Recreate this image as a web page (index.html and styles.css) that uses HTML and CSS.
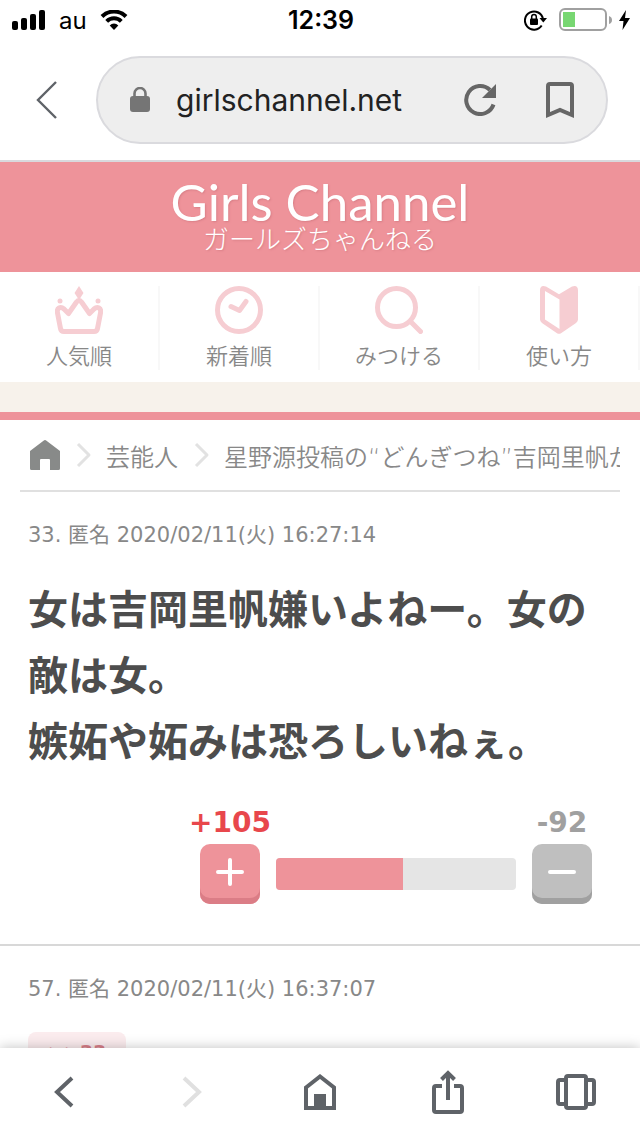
FILE: index.html
```html
<!DOCTYPE html>
<html lang="ja">
<head>
<meta charset="utf-8">
<meta name="viewport" content="width=device-width, initial-scale=1">
<title>Girls Channel ガールズちゃんねる</title>
<link rel="stylesheet" href="styles.css">
</head>
<body>
<div class="app">
  <div class="status">
    <div class="status-side">
      <svg width="34" height="20" viewBox="0 0 34 20"><rect x="0" y="11" width="6" height="9" rx="2"/><rect x="9" y="8" width="6" height="12" rx="2"/><rect x="18" y="4" width="6" height="16" rx="2"/><rect x="27" y="0" width="6" height="20" rx="2"/></svg>
      <span class="carrier">au</span>
      <svg width="28" height="20" viewBox="0 0 28 20"><path d="M14 20l4.300-4.600a6 6 0 0 0-8.600 0z"/><path d="M6.700 11.300a10.400 10.400 0 0 1 14.600 0M2 6.500a17 17 0 0 1 24 0" fill="none" stroke="#000" stroke-width="4"/></svg>
    </div>
    <time class="clock">12:39</time>
    <div class="status-side status-right">
      <svg width="23" height="22" viewBox="0 0 23 22"><path d="M17.700 16.500a9.100 9.100 0 1 1 1.300-6.500" fill="none" stroke="#000" stroke-width="2"/><path d="M15.500 9h7.500l-3.700 4.500z"/><rect x="6" y="9.500" width="8" height="6.500" rx="1"/><path d="M7.700 10V7.700a2.300 2.300 0 0 1 4.600 0V10" fill="none" stroke="#000" stroke-width="1.500"/></svg>
      <svg class="battery" width="54" height="24" viewBox="0 0 54 24"><rect x="1" y="1" width="46" height="21" rx="5" fill="#fff" stroke="#a0a0a0" stroke-width="2"/><rect x="4" y="4" width="12" height="15" fill="#78d772"/><path d="M50 8q3 1 3 4t-3 4z" fill="#a0a0a0"/></svg>
      <svg width="11" height="20" viewBox="0 0 11 20"><path d="M7 0L0 11h4.500L3.500 20 11 8H6z"/></svg>
    </div>
  </div>

  <div class="toolbar">
    <button class="icon-btn" type="button" aria-label="戻る"><svg width="22" height="40" viewBox="0 0 22 40" fill="none" stroke="#5f6368" stroke-width="2.400"><path d="M20 2L2 20l18 18"/></svg></button>
    <div class="address">
      <svg width="20" height="26" viewBox="0 0 20 26" fill="#757575"><rect y="9" width="20" height="16" rx="3"/><path d="M4.500 11V6.500a5.500 5.500 0 0 1 11 0V11" fill="none" stroke="#757575" stroke-width="2.600"/></svg>
      <input class="url" type="text" value="girlschannel.net" aria-label="アドレス" readonly>
      <button class="icon-btn" type="button" aria-label="再読み込み"><svg width="32" height="32" viewBox="0 0 32 32"><path d="M29.500 20.500A14 14 0 1 1 26 6" fill="none" stroke="#666" stroke-width="4"/><path d="M32 0v14H18z" fill="#666"/></svg></button>
      <button class="icon-btn" type="button" aria-label="ブックマーク"><svg width="28" height="36" viewBox="0 0 28 36" fill="none" stroke="#666" stroke-width="4"><path d="M2 33V4q0-2 2-2h20q2 0 2 2v29l-12-5z"/></svg></button>
    </div>
  </div>

  <main class="page">
    <header class="brand">
      <a href="#" class="brand-link">
        <span class="brand-name">Girls Channel</span>
        <span class="brand-kana">ガールズちゃんねる</span>
      </a>
    </header>

    <nav class="tabs">
      <a class="tab" href="#"><svg width="48" height="48" viewBox="0 0 48 48" fill="none" stroke="#f6cdd2" stroke-width="5" stroke-linejoin="round"><path d="M9 45.500h30q3 0 3.500-3L45.500 27c1-5-3-7-6.500-4L34.500 27.500 26.500 16q-2.500-3-5 0L13.500 27.500 9 23C5.500 20 1.500 22 2.500 27l3 15.500q.5 3 3.500 3z"/><path d="M24 0l4.500 7L24 14l-4.500-7z" fill="#f6cdd2" stroke="none"/><circle cx="5" cy="15" r="2.500" fill="#f6cdd2" stroke="none"/><circle cx="43" cy="15" r="2.500" fill="#f6cdd2" stroke="none"/></svg><span>人気順</span></a>
      <a class="tab" href="#"><svg width="48" height="48" viewBox="0 0 48 48" fill="none" stroke="#f6cdd2" stroke-width="5" stroke-linecap="round" stroke-linejoin="round"><circle cx="24" cy="24" r="21.500"/><path d="M16 20.500l8.500 4L31 15.500"/></svg><span>新着順</span></a>
      <a class="tab" href="#"><svg width="48" height="48" viewBox="0 0 48 48" fill="none" stroke="#f6cdd2" stroke-width="5" stroke-linecap="round"><circle cx="21.500" cy="21.500" r="19"/><path d="M36 36l9.500 9.500"/></svg><span>みつける</span></a>
      <a class="tab" href="#"><svg width="38" height="48" viewBox="0 0 38 48"><path fill="#f6cdd2" fill-rule="evenodd" d="M6 .6l13 7.700L32 .6q6-2 6 4v29q0 2-2 3.400L21 47.200q-2 1.300-4 0L2 37q-2-1.400-2-3.400v-29q0-6 6-4zM5 5v28.500L19.500 43V13.500z"/></svg><span>使い方</span></a>
    </nav>

    <div class="ad-space"></div>

    <nav class="crumbs" aria-label="パンくず">
      <a href="#" aria-label="ホーム"><svg width="30" height="30" viewBox="0 0 30 30" fill="#888a89"><path d="M0 11L13.500.7q1.500-1.200 3 0L30 11v17.500q0 1.500-1.500 1.500H20V20q0-1-1-1h-8q-1 0-1 1v10H1.500Q0 30 0 28.500z"/></svg></a>
      <svg class="sep" width="16" height="26" viewBox="0 0 16 26" fill="none" stroke="#e2e2e2" stroke-width="3" stroke-linejoin="round"><path d="M2 2l11 11L2 24"/></svg>
      <a href="#">芸能人</a>
      <svg class="sep" width="16" height="26" viewBox="0 0 16 26" fill="none" stroke="#e2e2e2" stroke-width="3" stroke-linejoin="round"><path d="M2 2l11 11L2 24"/></svg>
      <span class="crumb-current">星野源投稿の“どんぎつね”吉岡里帆が</span>
    </nav>

    <article class="post">
      <p class="meta">33. 匿名 2020/02/11(火) 16:27:14</p>
      <p class="text">女は吉岡里帆嫌いよねー。女の敵は女。<br>嫉妬や妬みは恐ろしいねぇ。</p>
      <div class="votes">
        <div class="vote">
          <span class="count plus">+105</span>
          <button class="vote-btn plus-btn" type="button" aria-label="プラス"><svg width="28" height="28" viewBox="0 0 28 28" stroke="#fff" stroke-width="4" stroke-linecap="round"><path d="M2 14h24M14 2v24"/></svg></button>
        </div>
        <div class="ratio"><div class="ratio-fill" style="width:53%"></div></div>
        <div class="vote">
          <span class="count minus">-92</span>
          <button class="vote-btn minus-btn" type="button" aria-label="マイナス"><svg width="28" height="28" viewBox="0 0 28 28" stroke="#fff" stroke-width="4" stroke-linecap="round"><path d="M2 14h24"/></svg></button>
        </div>
      </div>
    </article>

    <article class="post">
      <p class="meta">57. 匿名 2020/02/11(火) 16:37:07</p>
      <a class="anchor" href="#">&gt;&gt;33</a>
    </article>
  </main>

  <nav class="bottom" aria-label="ブラウザ">
    <button class="icon-btn" type="button" aria-label="戻る"><svg width="20" height="32" viewBox="0 0 20 32" fill="none" stroke="#5f6368" stroke-width="4"><path d="M18 2L3 16l15 14"/></svg></button>
    <button class="icon-btn" type="button" aria-label="進む" disabled><svg width="20" height="32" viewBox="0 0 20 32" fill="none" stroke="#e0e0e0" stroke-width="4"><path d="M2 2l15 14L2 30"/></svg></button>
    <button class="icon-btn" type="button" aria-label="ホーム"><svg width="32" height="36" viewBox="0 0 32 36" fill="none" stroke="#5f6368" stroke-width="4"><path d="M2 13.500L16 2.500l14 11V34H2z"/><path d="M10 20h12v14H10z" fill="#5f6368" stroke="none"/></svg></button>
    <button class="icon-btn" type="button" aria-label="共有"><svg width="32" height="44" viewBox="0 0 32 44" fill="none" stroke="#5f6368" stroke-width="4"><path d="M10 16H4q-2 0-2 2v22q0 2 2 2h24q2 0 2-2V18q0-2-2-2h-6M16 30V4M9.500 9.500L16 3l6.500 6.500"/></svg></button>
    <button class="icon-btn" type="button" aria-label="タブ"><svg width="40" height="36" viewBox="0 0 40 36" fill="none" stroke="#5f6368" stroke-width="4"><rect x="10" y="2" width="20" height="32" rx="2"/><path d="M10 6H4Q2 6 2 8v20q0 2 2 2h6M30 6h6q2 0 2 2v20q0 2-2 2h-6"/></svg></button>
  </nav>
</div>
</body>
</html>
```

FILE: styles.css
```css
* {
  box-sizing: border-box;
}

body {
  margin: 0;
  background: #fff;
  color: #888;
  font-family: "DejaVu Sans", "Noto Sans CJK JP", sans-serif;
}

p {
  margin: 0;
}

a {
  color: inherit;
  text-decoration: none;
}

svg {
  display: block;
  flex: none;
}

button {
  padding: 0;
  border: 0;
  background: none;
}

.app {
  display: flex;
  flex-direction: column;
  height: 100vh;
  overflow: hidden;
}

/* Status bar */
.status {
  display: flex;
  flex: none;
  align-items: center;
  height: 40px;
  padding: 0 10px 0 12px;
  color: #000;
  font-family: Inter, sans-serif;
}

.status-side {
  display: flex;
  flex: 1;
  align-items: center;
  gap: 13px;
}

.status-right {
  justify-content: flex-end;
  gap: 6px;
}

.battery {
  margin-left: 6px;
}

.carrier {
  font-size: 24px;
}

.clock {
  font-size: 25px;
  font-weight: 600;
}

/* Address bar */
.toolbar {
  display: flex;
  flex: none;
  align-items: center;
  gap: 38px;
  height: 122px;
  padding: 0 32px 0 36px;
  border-bottom: 2px solid #d9d9dd;
}

.address {
  display: flex;
  flex: 1;
  align-items: center;
  gap: 26px;
  min-width: 0;
  height: 88px;
  padding: 0 32px;
  border: 2px solid #dadade;
  border-radius: 44px;
  background: #eee;
}

.url {
  flex: 1;
  width: 0;
  min-width: 0;
  padding: 0;
  border: 0;
  outline: 0;
  background: none;
  color: #222;
  font: 30px Inter, sans-serif;
}

.address .icon-btn + .icon-btn {
  margin-left: 24px;
}

/* Site */
.page {
  flex: 1;
  min-height: 0;
  overflow: hidden;
}

.brand {
  height: 110px;
  padding-top: 16px;
  background: #ee939a;
  color: #fff;
  text-align: center;
}

.brand-link {
  display: flex;
  flex-direction: column;
  text-shadow: 1px 1px 2px #d97f87;
}

.brand-name {
  font: 400 51px/48px Lato, sans-serif;
}

.brand-kana {
  font: 300 26px/24px "Noto Sans CJK JP", sans-serif;
}

.tabs {
  display: grid;
  grid-template-columns: repeat(4, 1fr);
  height: 110px;
  padding: 14px 0;
}

.tab {
  display: flex;
  flex-direction: column;
  align-items: center;
  gap: 4px;
  border-right: 2px solid #f8f8f8;
  font: 350 22px/32px "Noto Sans CJK JP", sans-serif;
}

.ad-space {
  height: 38px;
  border-bottom: 8px solid #ee939a;
  background: #f7f2eb;
}

.crumbs {
  display: flex;
  align-items: center;
  height: 72px;
  margin: 0 20px;
  padding-left: 10px;
  border-bottom: 2px solid #e0e0e0;
  overflow: hidden;
  font-size: 24px;
  font-weight: 350;
  white-space: nowrap;
}

.sep {
  margin: 0 14px 0 16px;
}

.crumb-current {
  flex: 1;
  overflow: hidden;
}

.post {
  padding: 28px 28px 40px;
  border-bottom: 2px solid #d8d8d8;
}

.meta {
  font-size: 21px;
  line-height: 30px;
}

.text {
  margin-top: 24px;
  color: #4d4d4d;
  font: 700 40px/66px "Noto Sans CJK JP", sans-serif;
}

.votes {
  display: flex;
  align-items: flex-end;
  justify-content: flex-end;
  gap: 16px;
  margin-top: 34px;
  padding-right: 20px;
}

.vote {
  display: flex;
  flex-direction: column;
  align-items: center;
  gap: 4px;
  width: 60px;
}

.count {
  font-size: 28px;
  font-weight: 700;
  line-height: 34px;
}

.plus {
  color: #e8474c;
}

.minus {
  color: #a0a0a0;
}

.vote-btn {
  display: flex;
  align-items: center;
  justify-content: center;
  width: 60px;
  height: 60px;
  border-radius: 10px;
}

.plus-btn {
  background: #ee939a;
  box-shadow: inset 0 -6px #db7d86;
}

.minus-btn {
  background: #bfbfbf;
  box-shadow: inset 0 -6px #a0a0a0;
}

.vote-btn svg {
  margin-bottom: 5px;
}

.ratio {
  width: 240px;
  height: 32px;
  margin-bottom: 14px;
  border-radius: 4px;
  background: #e5e5e5;
  overflow: hidden;
}

.ratio-fill {
  height: 100%;
  background: #ee939a;
}

.anchor {
  display: inline-block;
  margin-top: 28px;
  padding: 0 20px;
  border-radius: 8px;
  background: #fbecee;
  color: #d9808a;
  font-size: 19px;
  font-weight: 700;
  line-height: 40px;
}

/* Browser controls */
.bottom {
  position: relative;
  display: grid;
  flex: none;
  grid-template-columns: repeat(5, 1fr);
  align-items: center;
  justify-items: center;
  height: 88px;
  background: #fff;
  box-shadow: 0 0 12px rgba(0, 0, 0, 0.25);
}
```
